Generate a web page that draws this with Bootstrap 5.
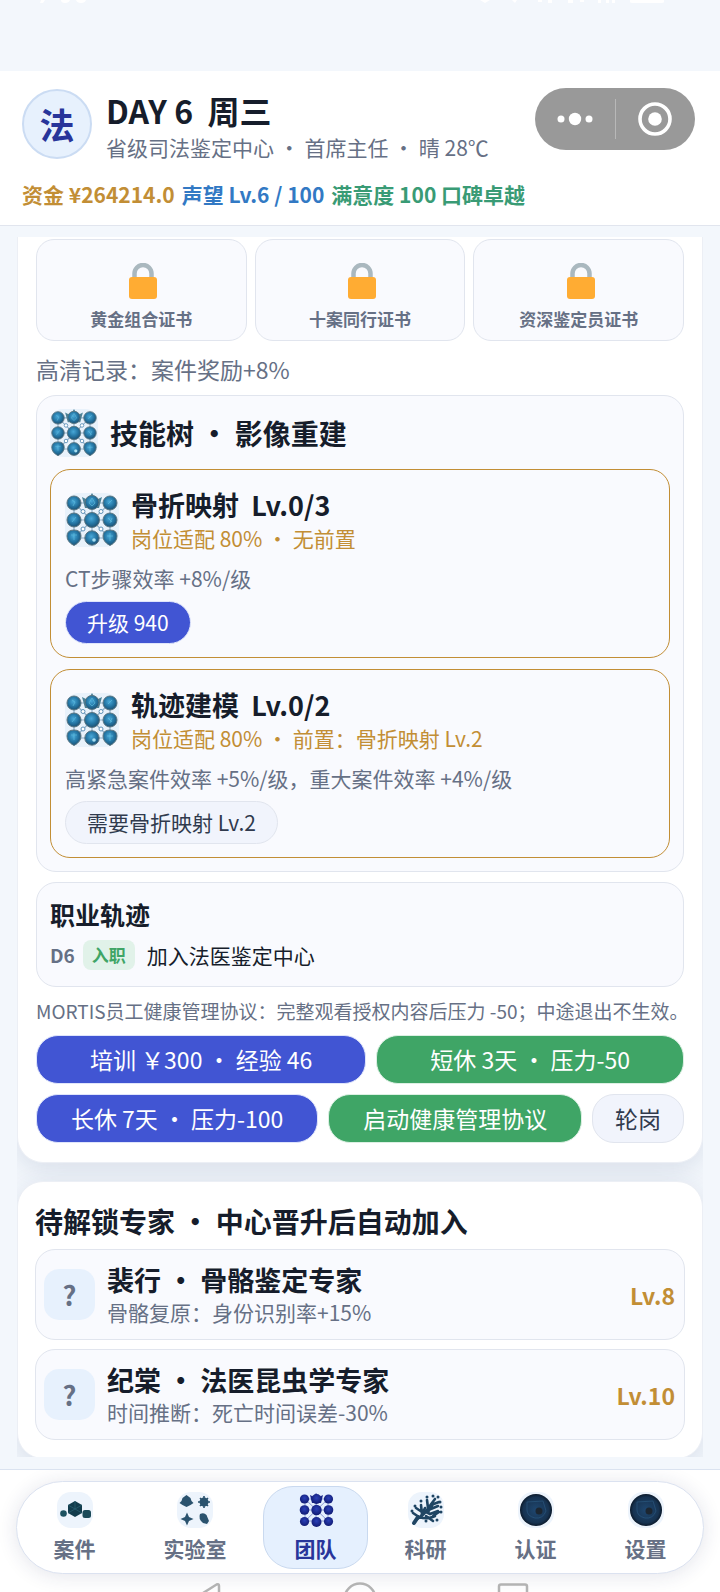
<!DOCTYPE html>
<html lang="zh-CN">
<head>
<meta charset="utf-8">
<meta name="viewport" content="width=device-width, initial-scale=1">
<title>法医鉴定中心 · 团队</title>
<link href="https://cdn.jsdelivr.net/npm/bootstrap@5.3.0/dist/css/bootstrap.min.css" rel="stylesheet">
<style>
:root{--ink:#161d2b;--muted:#667085;--gold:#c28e35;--blue:#3279c4;--jade:#399b75;--indigo:#4155d3;--leaf:#3fa566;--navy:#28359a;--line:#e1e5ee;--panel:#f9fafe;--pale:#e7f1fd}
body{font-family:"Noto Sans CJK SC",sans-serif;color:var(--ink);background:#f3f7fc;height:100vh;overflow:hidden;font-size:21px;line-height:30px}
h1,h2,h3,p{margin:0;line-height:inherit;font-size:inherit}
.t-muted{color:var(--muted)}.t-gold{color:var(--gold)}.t-blue{color:var(--blue)}.t-jade{color:var(--jade)}
.status-strip{height:71px}
.status-strip svg{display:block;width:100%;height:4px}
.top-head{background:#fff;border-bottom:1px solid var(--line);padding:17px 25px 16px 22px;height:155px}
.avatar{width:70px;height:70px;border-radius:50%;background:var(--pale);border:2px solid #cbdcf3;color:var(--navy);font-size:35px;font-weight:700;margin:1px 14px 0 0}
.day-title{font-size:32px;line-height:44px;font-weight:700}
.capsule{width:160px;height:62px;border-radius:31px;background:#999}
.capsule button{flex:1;border:0;background:none;padding:0;height:100%;display:flex;align-items:center;justify-content:center}
.capsule i{width:1px;height:40px;background:#b8b8b8}
.stats{gap:7px;font-weight:700;margin-top:17px;white-space:nowrap}
.feed{margin:11px 17px 12px;flex:1 1 0;min-height:0;overflow:hidden}
.sheet{background:#fff;border-radius:26px;box-shadow:0 6px 26px rgba(40,60,110,.13);border:1px solid #eceff5}
.sheet-open{border-radius:0 0 26px 26px;border-top:0;padding:2px 18px 19px}
.sheet-next{margin-top:18px;padding:19px 17px 18px}
.certs{gap:8px}
.cert{flex:1;background:var(--panel);border:1px solid var(--line);border-radius:18px;padding:23px 0 9px;text-align:center;font-size:17px;line-height:24px;font-weight:700;color:var(--muted)}
.cert svg{display:block;margin:0 auto 8px}
.record{font-size:23px;line-height:34px;margin:11px 0 9px}
.panel-box{background:var(--panel);border:1px solid var(--line);border-radius:20px;padding:13px}
.tree-title{font-size:28px;line-height:48px;font-weight:700}
.skill{border:1px solid var(--gold);border-radius:20px;padding:17px 14px 13px}
.skill+.skill{margin-top:11px}
.skill-name{font-size:27px;line-height:36px;font-weight:700}
.skill-desc{line-height:32px;margin:9px 0 7px}
.pill{border:1px solid #dfe5fb;border-radius:22px;background:var(--indigo);color:#fff;font-size:21px;line-height:30px;padding:5px 21px 6px;display:block}
.pill-plain{background:#f1f4fc;border-color:var(--line);color:#303a4d}
.pill-leaf{background:var(--leaf);border-color:#dcf0e3}
.career{margin-top:10px;padding-bottom:16px}
.career h3{font-size:25px;line-height:36px;font-weight:700}
.day-tag{font-size:19px;font-weight:700}
.join-tag{font-size:17px;font-weight:700;color:#3fa566;background:#e1f2e9;border-radius:8px;padding:0 9px}
.note{font-size:19px;margin:9px -12px 9px 0;white-space:nowrap}
.acts{gap:10px}
.acts+.acts{margin-top:10px}
.acts .pill{font-size:23px;line-height:34px;padding:6px 22px 7px;white-space:nowrap}
.expert{background:var(--panel);border:1px solid var(--line);border-radius:20px;padding:0 9px 0 8px;height:91px}
.expert+.expert{margin-top:9px}
.unknown{width:51px;height:51px;border-radius:15px;background:var(--pale);font-size:27px;font-weight:700}
.next-title{font-size:28px;line-height:40px;font-weight:700;margin-bottom:8px}
.expert h3{font-size:27px;line-height:34px;font-weight:700}
.level{font-size:23px;font-weight:700}
.dock{height:123px;background:#fff;border-top:1px solid #dbe3f0;padding:11px 16px 0;overflow:hidden;flex:none}
.dock-bar{border:1px solid #dbe2f0;border-radius:47px;background:#fff;padding:4px 5px;gap:5px;box-shadow:0 2px 20px rgba(30,45,90,.12)}
.dock-bar a{flex:1 1 auto;border:1px solid transparent;border-radius:30px;padding:5px 0;text-decoration:none;color:var(--muted);font-weight:700;display:flex;flex-direction:column;align-items:center;gap:5px}
.dock-bar a.on{background:#e5f0fe;border-color:#c9d9ef;color:var(--navy)}
.dock-bar svg{display:block}
.sys-keys{margin-top:8px;padding:0 171px 0 179px}
</style>
<script src="https://cdn.jsdelivr.net/npm/bootstrap@5.3.0/dist/js/bootstrap.bundle.min.js"></script>
</head>
<body class="d-flex flex-column">
<svg width="0" height="0" class="position-absolute" aria-hidden="true">
<defs>
<radialGradient id="orb" cx=".45" cy=".4" r=".62"><stop offset="0" stop-color="#48a8d8"/><stop offset=".55" stop-color="#2577a5"/><stop offset="1" stop-color="#1c4e70"/></radialGradient>
<radialGradient id="orbNavy" cx=".5" cy=".4" r=".6"><stop offset="0" stop-color="#2a40b8"/><stop offset="1" stop-color="#111b72"/></radialGradient>
<radialGradient id="disc" cx=".5" cy=".5" r=".5"><stop offset="0" stop-color="#1f4770"/><stop offset=".8" stop-color="#173351"/><stop offset="1" stop-color="#0c1a2b"/></radialGradient>
<symbol id="lock" viewBox="-4 0 32 36"><path d="M5.500 15V10.500a8.500 8.500 0 0 1 17 0V15" fill="none" stroke="#aab8bf" stroke-width="4.500"/><rect y="14" width="28" height="22" rx="3" fill="#ffac33"/></symbol>
<symbol id="tree" viewBox="0 0 54 54">
<rect width="54" height="54" rx="14" fill="#e9f2fb"/>
<path d="M9 10H45M9 27H45M9 45H45M9 10V45M27 10V45M45 10V45M9 10L45 45M45 10L9 45" stroke="#8fb0ca" stroke-width="1.200" fill="none"/>
<g fill="#fff" stroke="#5f92b8"><circle cx="18" cy="18.500" r="2"/><circle cx="36" cy="18.500" r="2"/><circle cx="18" cy="36" r="2"/><circle cx="36" cy="36" r="2"/></g>
<path d="M17 4l6 3 4-7 4 7 6-3-3 11H20z" fill="#4b8297"/>
<g fill="url(#orb)" stroke="#5b7682" stroke-width="1"><circle cx="9" cy="10" r="7"/><circle cx="27" cy="9.500" r="7"/><circle cx="45" cy="10" r="7"/><circle cx="9" cy="27" r="7"/><circle cx="27" cy="27" r="7.500"/><circle cx="45" cy="27" r="7"/><path d="M2 43q0-6 7-6t7 6q0 6-7 9.500q-7-3.500-7-9.500z"/><circle cx="27" cy="45" r="7.200"/><path d="M38 43q0-6 7-6t7 6q0 6-7 9.500q-7-3.500-7-9.500z"/></g>
<g stroke="#62bfe0" stroke-width="1" fill="none" opacity=".6"><path d="M7 7l3 2-2 4M43 11l4-4M24 10l3-5 3 5-3 3zM7 29l4-5M43 25l4 4M47 25l-2 5M9 40v7M6 42h6M42 43h6M45 40v8"/></g><circle cx="29" cy="47" r="1.800" fill="#a9dff1"/>
</symbol>
</defs>
</svg>
<div class="status-strip flex-shrink-0"><svg viewBox="0 0 720 4" preserveAspectRatio="none" aria-hidden="true"><path d="M41 0h4l-2 3h-3zM61 0h9q-1 3-5 3t-4-3zM76 0h10q-1 3-5 3t-5-3zM480 0h10l-5 3zM512 0h5l-2 3zM538 0h4v2h-4zM548 0h4v3h-4zM568 0h5v3h-5zM580 0h4v2h-4zM598 0h3v3h-3zM606 0h3v3h-3zM612 0h3v3h-3zM630 0h34v2q0 1-3 1h-28q-3 0-3-1z" fill="#fff"/></svg></div>
<header class="top-head flex-shrink-0">
<div class="d-flex align-items-start">
<div class="avatar d-flex align-items-center justify-content-center flex-shrink-0">法</div>
<div class="flex-grow-1 text-nowrap">
<h1 class="day-title">DAY 6&nbsp; 周三</h1>
<p class="t-muted">省级司法鉴定中心 · 首席主任 · 晴 28℃</p>
</div>
<div class="capsule d-flex align-items-center flex-shrink-0">
<button type="button" aria-label="更多"><svg width="36" height="16" viewBox="0 0 36 16" fill="#fff"><circle cx="4" cy="8" r="3.500"/><circle cx="18" cy="8" r="6.200"/><circle cx="32" cy="8" r="3.500"/></svg></button>
<i></i>
<button type="button" aria-label="关闭"><svg width="36" height="36" viewBox="0 0 36 36"><circle cx="18" cy="18" r="15" fill="none" stroke="#fff" stroke-width="3.600"/><circle cx="18" cy="18" r="6.800" fill="#fff"/></svg></button>
</div>
</div>
<div class="stats d-flex"><span class="t-gold">资金 ¥264214.0</span><span class="t-blue">声望 Lv.6 / 100</span><span class="t-jade">满意度 100 口碑卓越</span></div>
</header>
<main class="feed">
<section class="sheet sheet-open">
<div class="certs d-flex">
<div class="cert"><svg width="32" height="36"><use href="#lock"/></svg>黄金组合证书</div>
<div class="cert"><svg width="32" height="36"><use href="#lock"/></svg>十案同行证书</div>
<div class="cert"><svg width="32" height="36"><use href="#lock"/></svg>资深鉴定员证书</div>
</div>
<p class="record t-muted">高清记录：案件奖励+8%</p>
<div class="panel-box">
<div class="d-flex align-items-center mb-2 pb-1"><svg class="flex-shrink-0" width="48" height="48"><use href="#tree"/></svg><h2 class="tree-title ms-2 ps-1">技能树 · 影像重建</h2></div>
<article class="skill">
<div class="d-flex align-items-center"><svg class="flex-shrink-0" width="54" height="54"><use href="#tree"/></svg><div class="ms-2 ps-1"><h3 class="skill-name">骨折映射&nbsp; Lv.0/3</h3><p class="t-gold">岗位适配 80% · 无前置</p></div></div>
<p class="skill-desc t-muted">CT步骤效率 +8%/级</p>
<button type="button" class="pill">升级 940</button>
</article>
<article class="skill">
<div class="d-flex align-items-center"><svg class="flex-shrink-0" width="54" height="54"><use href="#tree"/></svg><div class="ms-2 ps-1"><h3 class="skill-name">轨迹建模&nbsp; Lv.0/2</h3><p class="t-gold">岗位适配 80% · 前置：骨折映射 Lv.2</p></div></div>
<p class="skill-desc t-muted">高紧急案件效率 +5%/级，重大案件效率 +4%/级</p>
<button type="button" class="pill pill-plain">需要骨折映射 Lv.2</button>
</article>
</div>
<div class="panel-box career">
<h3>职业轨迹</h3>
<div class="d-flex align-items-center mt-2"><span class="day-tag t-muted">D6</span><span class="join-tag ms-2">入职</span><span class="ms-2 ps-1">加入法医鉴定中心</span></div>
</div>
<p class="note t-muted">MORTIS员工健康管理协议：完整观看授权内容后压力 -50；中途退出不生效。</p>
<div class="acts d-flex"><button type="button" class="pill flex-grow-1">培训 ￥300 · 经验 46</button><button type="button" class="pill pill-leaf flex-grow-1">短休 3天 · 压力-50</button></div>
<div class="acts d-flex"><button type="button" class="pill flex-grow-1">长休 7天 · 压力-100</button><button type="button" class="pill pill-leaf flex-grow-1">启动健康管理协议</button><button type="button" class="pill pill-plain">轮岗</button></div>
</section>
<section class="sheet sheet-next">
<h2 class="next-title">待解锁专家 · 中心晋升后自动加入</h2>
<div class="expert d-flex align-items-center"><div class="unknown t-muted d-flex align-items-center justify-content-center">?</div><div class="flex-grow-1 ms-2 ps-1"><h3>裴行 · 骨骼鉴定专家</h3><p class="t-muted">骨骼复原：身份识别率+15%</p></div><span class="level t-gold">Lv.8</span></div>
<div class="expert d-flex align-items-center"><div class="unknown t-muted d-flex align-items-center justify-content-center">?</div><div class="flex-grow-1 ms-2 ps-1"><h3>纪棠 · 法医昆虫学专家</h3><p class="t-muted">时间推断：死亡时间误差-30%</p></div><span class="level t-gold">Lv.10</span></div>
</section>
</main>
<footer class="dock">
<nav class="dock-bar d-flex">
<a href="#cases"><svg width="36" height="36" viewBox="0 0 36 36"><rect width="36" height="36" rx="14" fill="#edf4fc"/><path d="M18 9l7 4v8l-7 4-7-4v-8z" fill="#123c4c"/><path d="M18 9v8l-7 4M18 17l7 4M11 13l7 4 7-4" stroke="#2b6272" stroke-width=".7" fill="none"/><circle cx="6.500" cy="21.500" r="3.300" fill="#1d5260"/><rect x="25.500" y="18" width="8.500" height="8" rx="2.500" fill="#1b4a58"/></svg>案件</a>
<a href="#lab"><svg width="36" height="36" viewBox="0 0 36 36"><rect width="36" height="36" rx="14" fill="#edf4fc"/><g fill="#2b536e"><path d="M9.500 3l4 3 1 3 2 2-3 2-4 2-4-2-3-2 2-2 1-3z"/><circle cx="27" cy="10" r="4.500"/><path d="M27 4v12M21 10h12M23 6l8 8M31 6l-8 8" stroke="#2b536e" stroke-width="1.600"/><path d="M10 20.500l2 4.500 4.500 2-4.500 2-2 4.500-2-4.500-4.500-2 4.500-2z"/><path d="M23 22q4-2 6.500 1l2.500 6-2 3-4-1q-5-4-3-9z"/></g></svg>实验室</a>
<a href="#team" class="on" aria-current="page"><svg width="36" height="36" viewBox="0 0 36 36"><path d="M7 7H30M7 18H30M7 29H30M7 7V29M18 7V29M30 7V29M7 7L30 29M30 7L7 29" stroke="#8d9bd4"/><path d="M12 3l4 2 2-4 3 4 4-2-2 8h-9z" fill="#1a278c"/><g fill="url(#orbNavy)"><circle cx="6.500" cy="7" r="4.600"/><circle cx="18.500" cy="7" r="5"/><circle cx="30.500" cy="7" r="4.600"/><circle cx="6.500" cy="18" r="4.800"/><circle cx="18.500" cy="18" r="5.200"/><circle cx="30.500" cy="18" r="4.800"/><circle cx="6.500" cy="29.500" r="4.600"/><circle cx="18.500" cy="30" r="5"/><circle cx="30.500" cy="29.500" r="4.600"/></g></svg>团队</a>
<a href="#research"><svg width="36" height="36" viewBox="0 0 36 36"><rect width="36" height="36" rx="14" fill="#edf4fc"/><g stroke="#1f4563" fill="none" stroke-linecap="round"><path d="M6 31l4-6" stroke-width="4"/><path d="M9 27q6-3 10-9t8-11M11 25l-6-4M11 25q9 3 16-1M14 22l-1-9M18 19l12-5M20 16l-1-8M14 20l-6-4M18 24l7 5M25 24l6-4M23 13l8-3M16 19l6 3 8-3M13 24l4-8M20 20l5-8" stroke-width="2.600"/></g><g fill="#1f4563"><circle cx="19" cy="5" r="1.500"/><circle cx="25" cy="4" r="1.500"/><circle cx="30" cy="5" r="1.500"/><circle cx="32" cy="10" r="1.500"/><circle cx="33" cy="15" r="1.500"/><circle cx="33" cy="20" r="1.500"/><circle cx="29" cy="28" r="1.500"/><circle cx="13" cy="9" r="1.500"/><circle cx="7" cy="14" r="1.500"/><circle cx="4" cy="19" r="1.500"/><circle cx="18" cy="29" r="1.500"/></g></svg>科研</a>
<a href="#cert"><svg width="36" height="36" viewBox="0 0 36 36"><rect width="36" height="36" rx="15" fill="#edf4fc"/><circle cx="18" cy="18" r="16" fill="url(#disc)"/><path d="M9 10l16-1 3 10q-3 8-11 7-8-2-8-8z" fill="none" stroke="#2f5f88" stroke-width=".8" opacity=".7"/><circle cx="21" cy="19" r="3.500" fill="#1c2631"/></svg>认证</a>
<a href="#settings"><svg width="36" height="36" viewBox="0 0 36 36"><rect width="36" height="36" rx="15" fill="#edf4fc"/><circle cx="18" cy="18" r="16" fill="url(#disc)"/><path d="M9 10l16-1 3 10q-3 8-11 7-8-2-8-8z" fill="none" stroke="#2f5f88" stroke-width=".8" opacity=".7"/><circle cx="21" cy="19" r="3.500" fill="#1c2631"/></svg>设置</a>
</nav>
<div class="sys-keys d-flex justify-content-between" aria-hidden="true"><svg width="40" height="32" viewBox="0 0 40 32" fill="none" stroke="#b3b3b3" stroke-width="2.500"><path d="M24 4Q24 1.500 21.500 2.500L1 15.500 21.500 29Q24 30 24 27Z"/></svg><svg width="34" height="34" viewBox="0 0 34 34"><circle cx="17" cy="17" r="15.500" fill="none" stroke="#b3b3b3" stroke-width="2.500"/></svg><svg width="48" height="32" viewBox="0 0 48 32"><rect x="14" y="2.500" width="28" height="28" rx="2" fill="none" stroke="#b3b3b3" stroke-width="2.500"/></svg></div>
</footer>
</body>
</html>
